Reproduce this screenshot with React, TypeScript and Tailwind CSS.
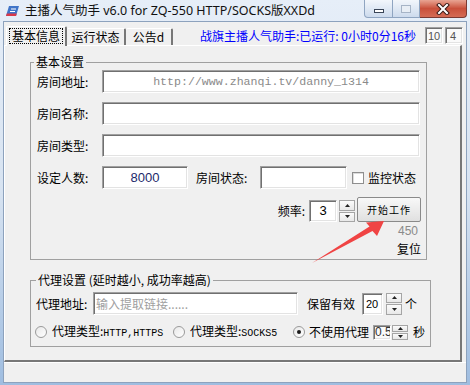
import React from 'react';

const cjk = "font-['Noto_Sans_CJK_SC',sans-serif]";

function Tri({ up = false }: { up?: boolean }) {
  return (
    <svg width="5" height="3" viewBox="0 0 5 3">
      <polygon points={up ? '2.5,0 5,3 0,3' : '0,0 5,0 2.5,3'} fill="#222" />
    </svg>
  );
}

function Spinner({ small = false }: { small?: boolean }) {
  return (
    <div className={small ? 'flex h-[15px] w-[16px] flex-col gap-px' : 'flex h-[22px] w-[16px] flex-col gap-px'}>
      <div className="flex flex-1 items-center justify-center border border-[#a5a5a5] bg-gradient-to-b from-[#fbfbfb] to-[#e8e8e8]">
        <Tri up />
      </div>
      <div className="flex flex-1 items-center justify-center border border-[#a5a5a5] bg-gradient-to-b from-[#fbfbfb] to-[#e8e8e8]">
        <Tri />
      </div>
    </div>
  );
}

function Field({ className = '', children }: { className?: string; children?: React.ReactNode }) {
  return (
    <div
      className={`flex items-center overflow-hidden border border-t-[#a0a0a0] border-l-[#a0a0a0] border-r-white border-b-white shadow-[inset_1px_1px_0_#707070,inset_-1px_-1px_0_#e3e3e3] ${className}`}
    >
      {children}
    </div>
  );
}

function Radio({ checked = false }: { checked?: boolean }) {
  return (
    <div className="flex h-[12px] w-[12px] shrink-0 items-center justify-center rounded-full border border-[#9a9a9a] bg-gradient-to-br from-[#e8e8e8] to-white">
      {checked && <div className="h-[4px] w-[4px] rounded-full bg-[#1a1a1a]" />}
    </div>
  );
}

export default function App() {
  return (
    <div className={`relative flex h-[385px] w-[470px] flex-col overflow-hidden bg-gradient-to-b from-[#e6eef8] via-[#d7e3f1] to-[#9fbde0] text-[12px] leading-[14px] text-black ${cjk}`}>
      {/* title bar */}
      <div className="flex h-[21px] shrink-0 items-start">
        <div className="flex h-[21px] items-center pl-[5px]">
          <svg width="14" height="12" viewBox="0 0 14 12">
            <polygon points="4,1 14,1 11,11 1,11" fill="#3f74c8" />
            <path d="M6 4 L11 4 M5 6.5 L10 6.5" stroke="#ffffff" strokeWidth="1.2" />
            <polygon points="1.8,8.5 11.8,8.5 11,11 1,11" fill="#d8394a" />
          </svg>
          <span className="ml-[6px] font-['Noto_Sans','Noto_Sans_CJK_SC',sans-serif] text-[12.5px] leading-[16px] text-[#111]">
            主播人气助手 v6.0 for ZQ-550 HTTP/SOCKS版XXDd
          </span>
        </div>
        <div className="ml-auto mr-[3px] flex h-[18px]">
          <div className="flex w-[29px] items-end justify-center rounded-bl-[4px] border border-t-0 border-[#8fa5c1] bg-gradient-to-b from-[#f2f6fb] to-[#cddbed] pb-[4px]">
            <div className="h-[4px] w-[10px] border border-[#3a4658] bg-white" />
          </div>
          <div className="flex w-[27px] items-center justify-center border-b border-r border-[#8fa5c1] bg-gradient-to-b from-[#f2f6fb] to-[#cddbed]">
            <div className="h-[8px] w-[10px] border border-[#a6b4c6] bg-[#e8eef5]" />
          </div>
          <div className="flex w-[47px] items-center justify-center rounded-br-[4px] border border-l-0 border-t-0 border-[#7a3a33] bg-gradient-to-b from-[#e8a493] via-[#c9503b] to-[#d46b55]">
            <svg width="14" height="12" viewBox="0 0 14 12">
              <path d="M3 2 L11 10 M11 2 L3 10" stroke="#3a1a16" strokeWidth="4" strokeLinecap="square" />
              <path d="M3 2 L11 10 M11 2 L3 10" stroke="#ffffff" strokeWidth="2" strokeLinecap="square" />
            </svg>
          </div>
        </div>
      </div>

      {/* client */}
      <div className="mx-[3px] flex h-[362px] shrink-0 flex-col border border-[#8da2bd] bg-[#f0f0f0]">
        {/* tab strip */}
        <div className="flex h-[23px] shrink-0 items-end pl-[2px]">
          <div className="relative z-10 -mb-px flex h-[20px] w-[61px] items-start justify-center rounded-t-[2px] border-l border-t border-r-2 border-l-white border-t-white border-r-[#777] bg-[#f0f0f0] pt-[1px]">
            <span className="border border-dotted border-black px-[2px] leading-[14px]">基本信息</span>
          </div>
          <div className="flex h-[17px] w-[59px] items-center justify-center rounded-t-[2px] border-t border-r-2 border-t-white border-r-[#777]">
            运行状态
          </div>
          <div className="flex h-[17px] w-[47px] items-center justify-center rounded-t-[2px] border-t border-r-2 border-t-white border-r-[#777]">
            公告d
          </div>
          <div className="flex flex-1 items-center self-stretch pt-[4px]">
            <span className="ml-[27px] text-[#0000ff]">战旗主播人气助手:已运行: 0小时0分16秒</span>
            <div className="ml-auto mr-[3px] flex gap-[2px]">
              <Field className="h-[17px] w-[18px] bg-[#fafafa] pl-[2px] font-['Liberation_Sans',sans-serif] text-[11px] text-[#555]">10</Field>
              <Field className="h-[17px] w-[18px] bg-[#fafafa] pl-[4px] font-['Liberation_Sans',sans-serif] text-[11px] text-[#555]">4</Field>
            </div>
          </div>
        </div>

        {/* tab page */}
        <div className="mr-[4px] h-[317px] shrink-0 border-b-2 border-l border-r-2 border-t border-b-[#777] border-l-white border-r-[#777] border-t-white pl-[25px] pt-[9px]">
          <fieldset className="w-[397px] border border-[#a0a0a0] px-[6px] pb-[3px] pt-[1px]">
            <legend className="-ml-[3px] px-[2px] leading-[14px]">基本设置</legend>

            <div className="flex h-[23px] items-center">
              <span className="w-[65px]">房间地址:</span>
              <Field className="h-[23px] flex-1 justify-center bg-white font-['Liberation_Mono',monospace] text-[11.6px] text-[#8a8a8a]">
                http://www.zhanqi.tv/danny_1314
              </Field>
            </div>
            <div className="mt-[9px] flex h-[23px] items-center">
              <span className="w-[65px]">房间名称:</span>
              <Field className="h-[23px] flex-1 bg-white" />
            </div>
            <div className="mt-[9px] flex h-[23px] items-center">
              <span className="w-[65px]">房间类型:</span>
              <Field className="h-[23px] flex-1 bg-white" />
            </div>
            <div className="mt-[9px] flex h-[23px] items-center">
              <span className="w-[65px]">设定人数:</span>
              <Field className="h-[23px] w-[86px] justify-center bg-white font-['Liberation_Sans',sans-serif] text-[13px] text-[#1c2a6b]">
                8000
              </Field>
              <span className="ml-[8px] w-[64px]">房间状态:</span>
              <Field className="h-[23px] w-[87px] bg-white" />
              <div className="ml-[5px] h-[12px] w-[12px] border border-[#8f8f8f] bg-white shadow-[inset_1px_1px_0_#dcdcdc]" />
              <span className="ml-[4px]">监控状态</span>
            </div>

            <div className="-mr-px mt-[8px] flex h-[25px] items-end justify-end">
              <span className="leading-[22px]">频率:</span>
              <Field className="ml-[4px] h-[22px] w-[28px] justify-center bg-white font-['Liberation_Sans',sans-serif] text-[13px]">3</Field>
              <div className="ml-[2px]">
                <Spinner />
              </div>
              <div className="ml-[2px] flex h-[25px] w-[64px] items-center justify-center rounded-[2px] border border-[#8a8a8a] bg-gradient-to-b from-[#f8f8f8] to-[#e0e0e0] text-[10px] tracking-[1px]">
                开始工作
              </div>
            </div>
            <div className="mt-[3px] pr-[2px] text-right font-['Liberation_Sans',sans-serif] leading-[12px] text-[#8a8a8a]">450</div>
            <div className="-mr-px mt-[5px] text-right leading-[14px]">复位</div>
          </fieldset>

          <fieldset className="mt-[13px] w-[397px] border border-[#a0a0a0] px-[5px] pb-[6px] pt-[5px]">
            <legend className="px-[2px] leading-[14px]">代理设置 (延时越小, 成功率越高)</legend>

            <div className="flex h-[23px] items-center">
              <span className="w-[57px]">代理地址:</span>
              <Field className="h-[23px] w-[205px] bg-white pl-[2px] text-[#a0a0a0]">输入提取链接......</Field>
              <span className="ml-[9px] w-[55px]">保留有效</span>
              <Field className="h-[22px] w-[21px] bg-white pl-[3px] font-['Liberation_Sans',sans-serif] text-[11px]">20</Field>
              <div className="ml-[3px]">
                <Spinner />
              </div>
              <span className="ml-[3px]">个</span>
            </div>

            <div className="-ml-px mt-[9px] flex h-[16px] items-center">
              <Radio />
              <span className="ml-[5px] w-[121px]">
                代理类型:<span className="font-['Liberation_Mono',monospace] text-[10px]">HTTP,HTTPS</span>
              </span>
              <Radio />
              <span className="ml-[5px] w-[103px]">
                代理类型:<span className="font-['Liberation_Mono',monospace] text-[10px]">SOCKS5</span>
              </span>
              <Radio checked />
              <span className="ml-[4px] w-[64px]">不使用代理</span>
              <Field className="h-[15px] w-[18px] bg-[#fafafa] pl-px font-['Liberation_Sans',sans-serif] text-[12px] text-[#333]">0.5</Field>
              <div className="ml-px">
                <Spinner small />
              </div>
              <span className="ml-[5px]">秒</span>
            </div>
          </fieldset>
        </div>

        {/* status strip */}
        <div className="flex-1 border-t border-white" />
      </div>

      {/* red arrow annotation */}
      <svg className="pointer-events-none absolute left-0 top-0" width="470" height="385" viewBox="0 0 470 385">
        <polygon points="312,263 369.5,226.5 366,222.5 384,221 377,236 372.5,231" fill="#f04444" />
      </svg>
    </div>
  );
}
